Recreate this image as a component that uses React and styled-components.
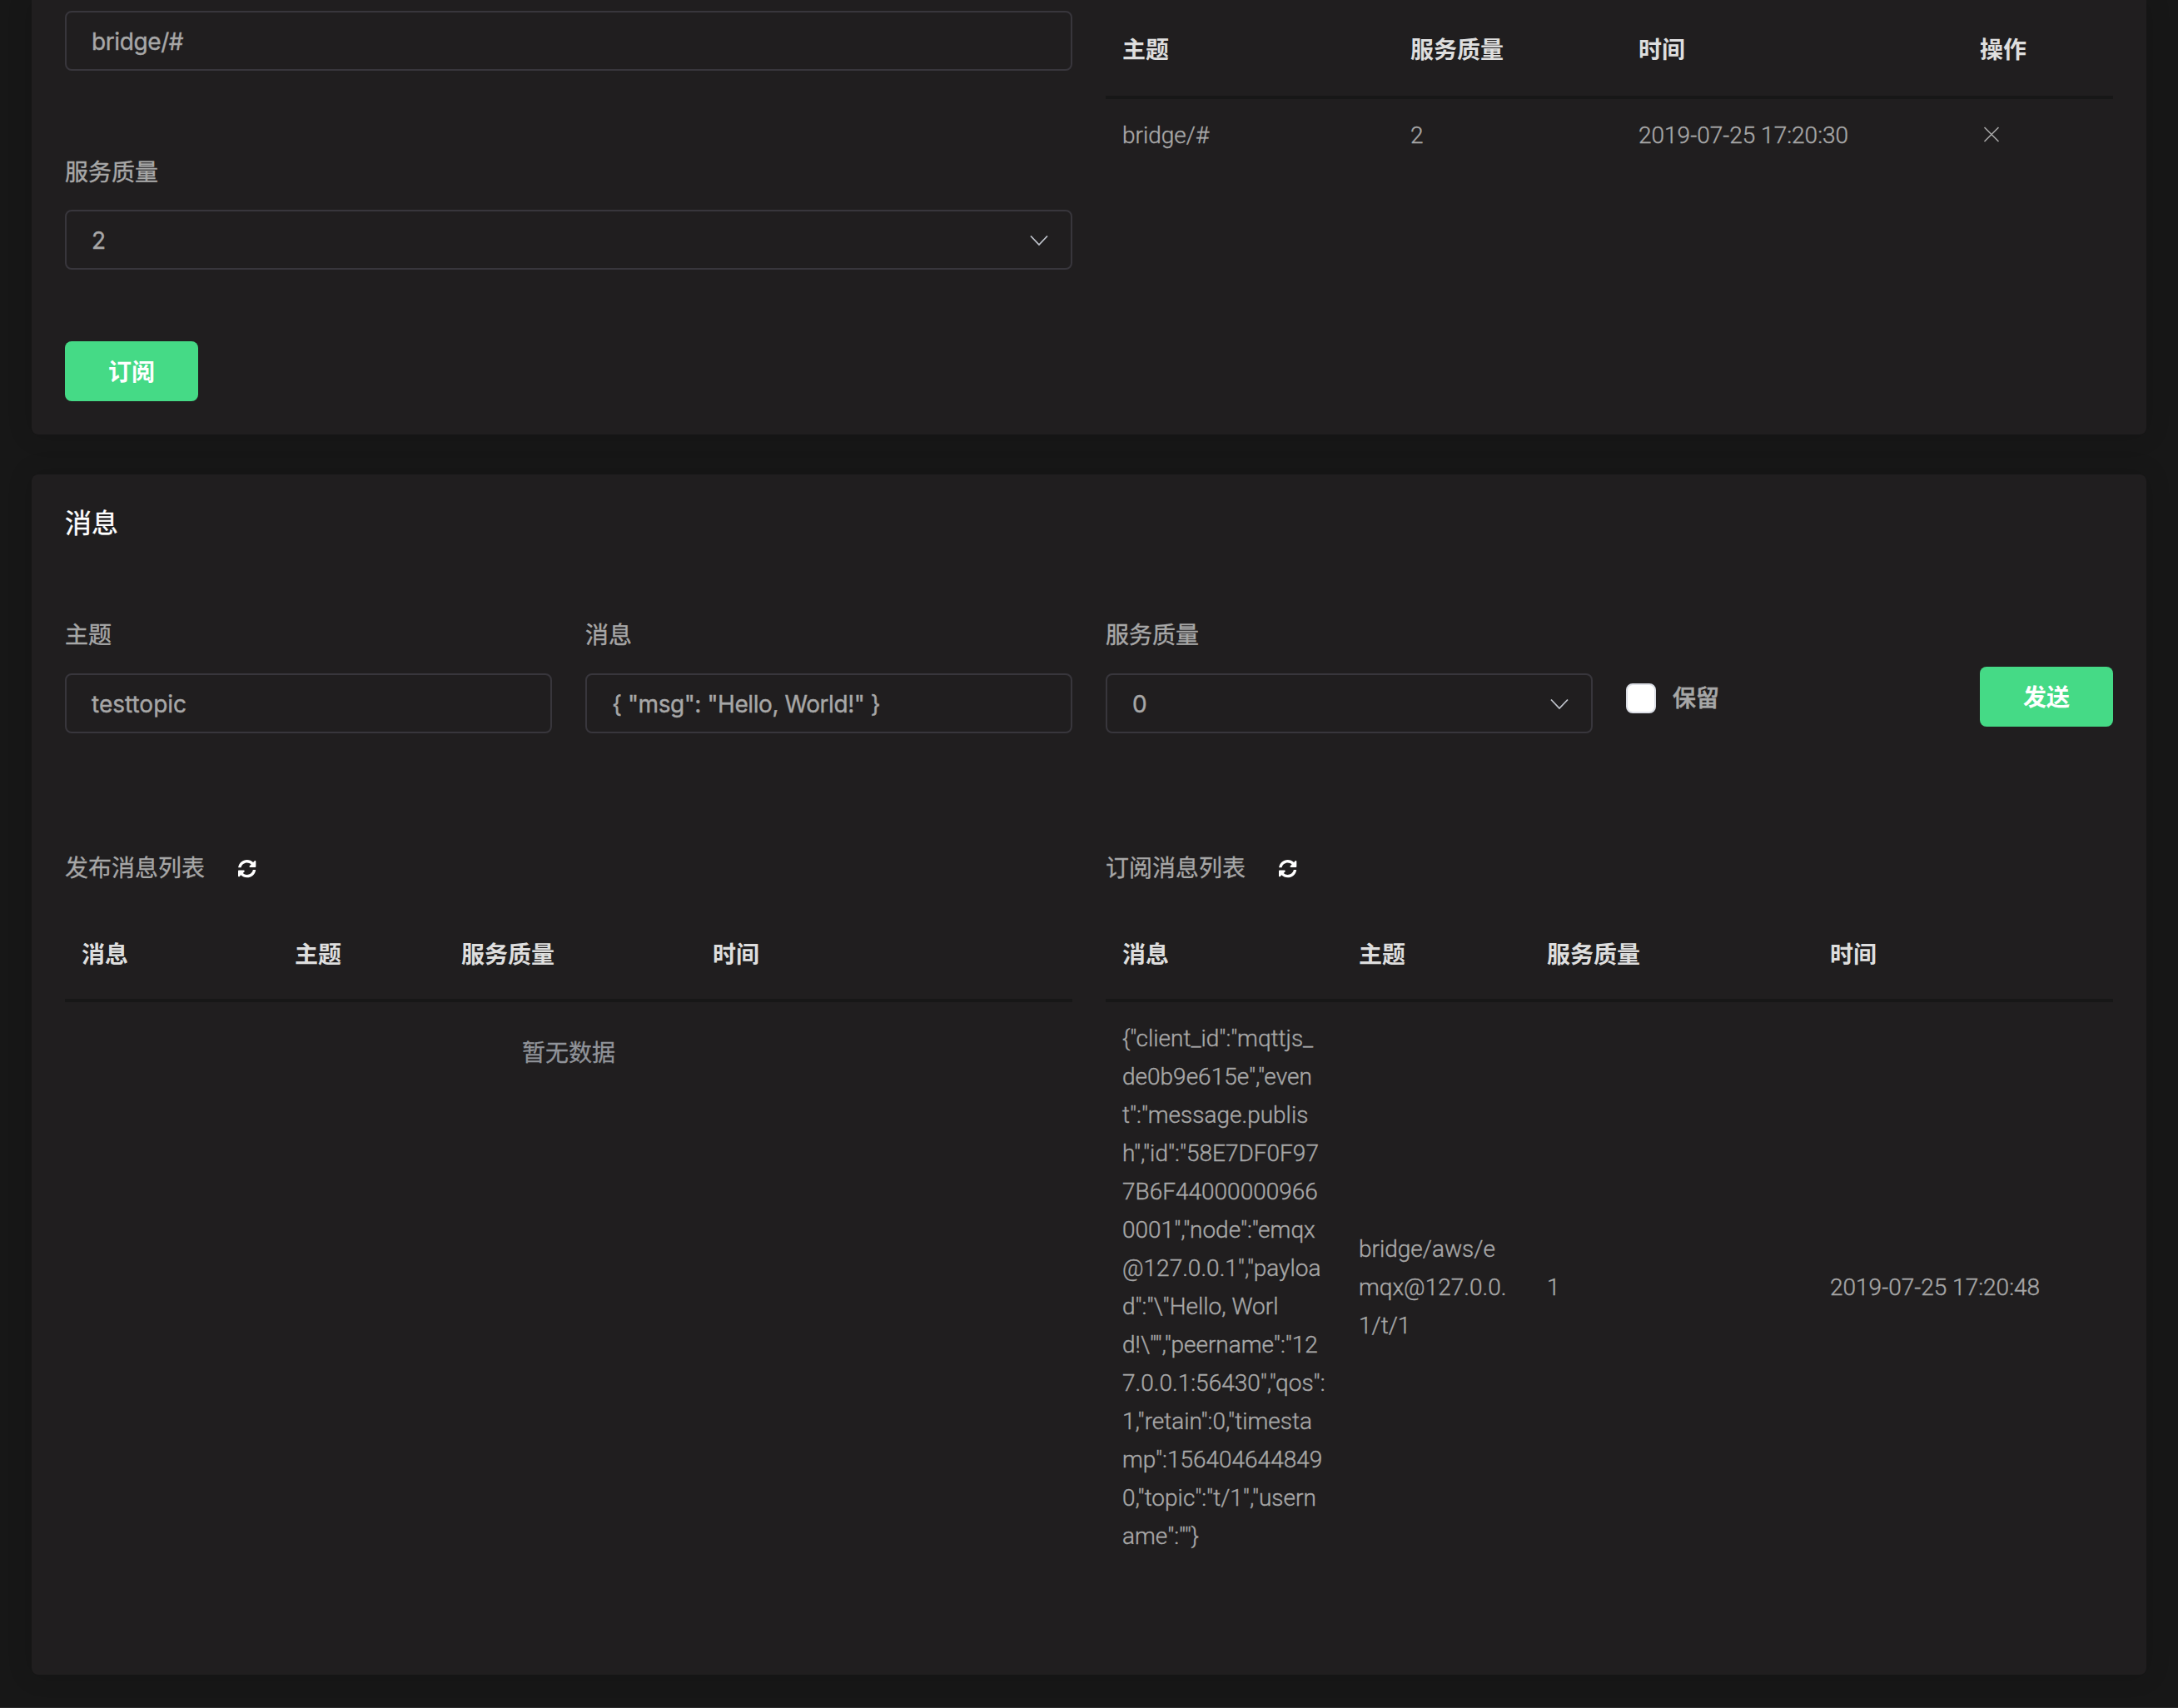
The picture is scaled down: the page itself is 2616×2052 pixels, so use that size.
import React from 'react';
import styled, { createGlobalStyle } from 'styled-components';

const Global = createGlobalStyle`
  *, *::before, *::after { box-sizing: border-box; }
  body {
    margin: 0;
    background: #171717;
    color: #a7a7a7;
    font: 400 28px/46px Roboto, "Noto Sans CJK SC", sans-serif;
  }
`;

const Page = styled.main`
  height: 2052px;
  padding: 0 38px;
  overflow: hidden;
  display: flex;
  flex-direction: column;
  gap: 48px;
  border-bottom: 1px solid #2b2b2b;
`;

const Card = styled.section`
  height: ${(p) => p.$height}px;
  padding: ${(p) => p.$top}px 40px 0;
  border-radius: ${(p) => (p.$open ? '0 0 8px 8px' : '8px')};
  background: #201e1f;
  box-shadow: 0 0 30px rgba(0, 0, 0, 0.16);
`;

const Columns = styled.div`
  display: grid;
  grid-template-columns: repeat(${(p) => p.$count}, minmax(0, 1fr));
  column-gap: 40px;
`;

const Column = styled.div`
  display: flex;
  flex-direction: column;
  align-items: stretch;
  padding-top: ${(p) => p.$top || 0}px;
`;

const CardTitle = styled.h2`
  height: 46px;
  margin: 0 0 88px;
  font-size: 32px;
  font-weight: 400;
  line-height: 49px;
  color: #fff;
  -webkit-text-stroke: 0.4px currentColor;
`;

const Label = styled.label`
  display: block;
  height: 46px;
  margin-bottom: ${(p) => p.$gap}px;
  line-height: 50px;
  color: #a7a7a7;
  -webkit-text-stroke: 0.4px currentColor;
`;

const Field = styled.div`
  display: flex;
  align-items: center;
  justify-content: space-between;
  height: 72px;
  padding: 1px 26px 0 30px;
  border: 2px solid #38363c;
  border-radius: 8px;
  color: #a7a7a7;
  font: 400 28px/68px Inter, sans-serif;
  letter-spacing: ${(p) => p.$tracking || 0}px;
  white-space: pre;
  -webkit-text-stroke: 0.4px currentColor;
`;

const Button = styled.button`
  width: 160px;
  height: 72px;
  padding: 3px 0 0;
  border: 0;
  border-radius: 8px;
  background: #45da86;
  color: #fff;
  font: 700 28px/69px Roboto, "Noto Sans CJK SC", sans-serif;
`;

const SubscribeButton = styled(Button)`
  margin-top: 86px;
`;

const SendRow = styled.div`
  display: flex;
  justify-content: space-between;
  align-items: center;
  height: 72px;
  margin-top: 62px;
`;

const Retain = styled.span`
  display: flex;
  align-items: center;
  gap: 20px;
  color: #a7a7a7;
`;

const RetainText = styled.span`
  padding-top: 6px;
  font-weight: 500;
  -webkit-text-stroke: 0.5px currentColor;
`;

const Checkbox = styled.span`
  width: 36px;
  height: 36px;
  margin-top: 4px;
  border: 2px solid #dcdfe6;
  border-radius: 8px;
  background: #fff;
`;

const ListTitle = styled.div`
  display: flex;
  align-items: center;
  gap: 40px;
  height: 42px;
  margin-top: 142px;
  color: #a7a7a7;
  -webkit-text-stroke: 0.3px currentColor;
`;

const Table = styled.table`
  width: 100%;
  table-layout: fixed;
  border-collapse: separate;
  border-spacing: 0;
`;

const Th = styled.th`
  height: ${(p) => p.$height}px;
  padding: ${(p) => p.$top}px 20px 0;
  border-bottom: 4px solid #171717;
  text-align: left;
  font-weight: 700;
  color: #dedede;
`;

const Td = styled.td`
  padding: 21px 20px 19px;
  text-align: left;
  vertical-align: middle;
  color: #a7a7a7;
  font-weight: 300;
  -webkit-text-stroke: 0.4px currentColor;
`;

const Line = styled.span`
  display: block;
  white-space: pre;
`;

const Empty = styled.div`
  padding-top: 39px;
  text-align: center;
  color: #909399;
  -webkit-text-stroke: 0.3px currentColor;
`;

const Icon = styled.svg`
  display: block;
  flex: none;
  fill: none;
`;

const Chevron = () => (
  <Icon width="24" height="16" viewBox="0 0 24 16" stroke="#c0c4cc" strokeWidth="1.8">
    <path d="M2 2.5 12 13 22 2.5" />
  </Icon>
);

const Close = () => (
  <Icon width="28" height="28" viewBox="0 0 28 28" stroke="#a7a7a7" strokeWidth="1.6">
    <path d="M5.5 4 22.5 21M22.5 4 5.5 21" />
  </Icon>
);

const Refresh = () => (
  <Icon width="21.5" height="21.5" viewBox="8 8 500 500">
    <path
      fill="#fff"
      d="M370.72 133.28C339.458 104.008 298.888 87.962 255.848 88c-77.458.068-144.328 53.178-162.791 126.85-1.344 5.363-6.122 9.15-11.651 9.15H24.103c-7.498 0-13.194-6.807-11.807-14.176C33.933 94.924 134.813 8 256 8c66.448 0 126.791 26.136 171.315 68.685L463.03 40.97C478.149 25.851 504 36.559 504 57.941V192c0 13.255-10.745 24-24 24H345.941c-21.382 0-32.09-25.851-16.971-40.971l41.75-41.749zM32 296h134.059c21.382 0 32.09 25.851 16.971 40.971l-41.75 41.75c31.262 29.273 71.835 45.319 114.876 45.28 77.418-.07 144.315-53.144 162.787-126.849 1.344-5.363 6.122-9.15 11.651-9.15h57.304c7.498 0 13.194 6.807 11.807 14.176C478.067 417.076 377.187 504 256 504c-66.448 0-126.791-26.136-171.315-68.685L48.97 471.03C33.851 486.149 8 475.441 8 454.059V320c0-13.255 10.745-24 24-24z"
    />
  </Icon>
);

const payload = [
  '{"client_id":"mqttjs_',
  'de0b9e615e","even',
  't":"message.publis',
  'h","id":"58E7DF0F97',
  '7B6F44000000966',
  '0001","node":"emqx',
  '@127.0.0.1","payloa',
  'd":"\\"Hello, Worl',
  'd!\\"","peername":"12',
  '7.0.0.1:56430","qos":',
  '1,"retain":0,"timesta',
  'mp":156404644849',
  '0,"topic":"t/1","usern',
  'ame":""}',
];

function DataTable({ widths, heads, headHeight, headTop, cells }) {
  return (
    <Table>
      <colgroup>
        {widths.map((w, i) => (
          <col key={i} width={w} />
        ))}
      </colgroup>
      <thead>
        <tr>
          {heads.map((h) => (
            <Th key={h} $height={headHeight} $top={headTop}>{h}</Th>
          ))}
        </tr>
      </thead>
      {cells && (
        <tbody>
          <tr>
            {cells.map((c, i) => (
              <Td key={i}>
                {Array.isArray(c) ? c.map((line) => <Line key={line}>{line}</Line>) : c}
              </Td>
            ))}
          </tr>
        </tbody>
      )}
    </Table>
  );
}

export default function App() {
  return (
    <>
      <Global />
      <Page>
        <Card $height={522} $top={0} $open>
          <Columns $count={2}>
            <Column $top={13}>
              <Field $tracking={-0.4}>bridge/#</Field>
              <Column $top={98}>
                <Label $gap={23}>服务质量</Label>
                <Field>2<Chevron /></Field>
              </Column>
              <SubscribeButton>订阅</SubscribeButton>
            </Column>
            <Column>
              <DataTable
                widths={[346, 274, 410, 180]}
                heads={['主题', '服务质量', '时间', '操作']}
                headHeight={119}
                headTop={7}
                cells={['bridge/#', '2', '2019-07-25 17:20:30', <Close key="close" />]}
              />
            </Column>
          </Columns>
        </Card>

        <Card $height={1442} $top={35}>
          <CardTitle>消息</CardTitle>
          <Columns $count={4}>
            <Column>
              <Label $gap={24}>主题</Label>
              <Field>testtopic</Field>
            </Column>
            <Column>
              <Label $gap={24}>消息</Label>
              <Field $tracking={-0.43}>{'{ "msg": "Hello, World!" }'}</Field>
            </Column>
            <Column>
              <Label $gap={24}>服务质量</Label>
              <Field>0<Chevron /></Field>
            </Column>
            <SendRow>
              <Retain><Checkbox /><RetainText>保留</RetainText></Retain>
              <Button>发送</Button>
            </SendRow>
          </Columns>

          <Columns $count={2}>
            <Column>
              <ListTitle>发布消息列表<Refresh /></ListTitle>
              <DataTable
                widths={[256, 200, 302, 452]}
                heads={['消息', '主题', '服务质量', '时间']}
                headHeight={139}
                headTop={30}
              />
              <Empty>暂无数据</Empty>
            </Column>
            <Column>
              <ListTitle>订阅消息列表<Refresh /></ListTitle>
              <DataTable
                widths={[284, 226, 340, 360]}
                heads={['消息', '主题', '服务质量', '时间']}
                headHeight={139}
                headTop={30}
                cells={[payload, ['bridge/aws/e', 'mqx@127.0.0.', '1/t/1'], '1', '2019-07-25 17:20:48']}
              />
            </Column>
          </Columns>
        </Card>
      </Page>
    </>
  );
}
